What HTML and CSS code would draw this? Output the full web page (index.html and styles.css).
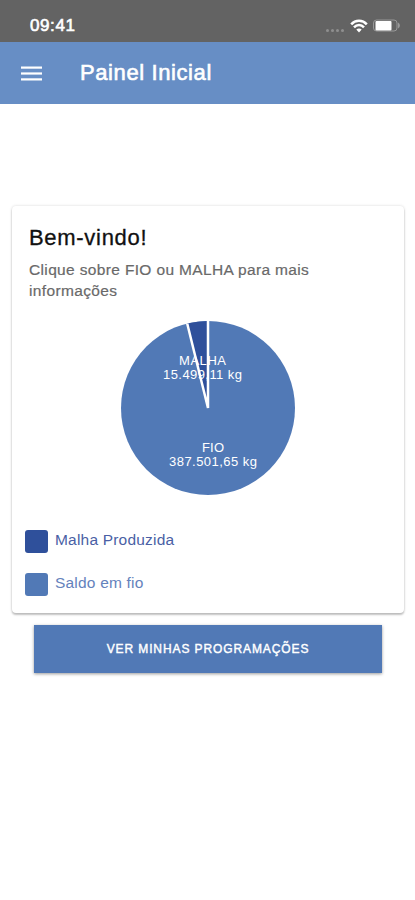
FILE: index.html
```html
<!DOCTYPE html>
<html lang="pt-BR">
  <head>
    <meta charset="UTF-8" />
    <meta name="viewport" content="width=device-width, initial-scale=1.0" />
    <title>Painel Inicial</title>
    <link rel="stylesheet" href="styles.css">
  </head>
  <body>
    <div class="status-bar">
      <span class="time">09:41</span>
      <div class="status-icons">
        <div class="signal"><i></i><i></i><i></i><i></i></div>
        <svg class="wifi" width="18" height="14" viewBox="0 0 18 14" fill="none" stroke="#fff" stroke-width="2.5">
          <path d="M1.2 5.3C5.4 0.7 12.6 0.7 16.8 5.3" />
          <path d="M4 8.3C6.8 5.3 11.2 5.3 14 8.3" />
          <path d="M9 13.4L6.3 10.5C7.8 9 10.2 9 11.7 10.5Z" fill="#fff" stroke="none" />
        </svg>
        <svg class="battery" width="28" height="14" viewBox="0 0 28 14">
          <rect x="0.5" y="1" width="23.500" height="11" rx="3" fill="none" stroke="#999" />
          <rect x="2.500" y="2" width="16" height="9.5" rx="1" fill="#fff" />
          <path d="M25 3.500C27.500 5 27.500 8 25 9.500Z" fill="#999" />
        </svg>
      </div>
    </div>

    <header class="toolbar">
      <svg class="menu" width="21" height="15" viewBox="0 0 21 15" fill="#fff">
        <rect y="0.5" width="21" height="2.2" />
        <rect y="6.4" width="21" height="2.2" />
        <rect y="12.3" width="21" height="2.2" />
      </svg>
      <h1>Painel Inicial</h1>
    </header>

    <main>
      <section class="card">
        <h2>Bem-vindo!</h2>
        <p class="subtitle">Clique sobre FIO ou MALHA para mais informações</p>

        <svg class="chart" width="180" height="180" viewBox="0 0 180 180">
          <circle cx="90" cy="90" r="87" fill="#5179b6" />
          <path d="M90 90L69.2 5.5A87 87 0 0 1 90 3Z" fill="#2f509b" />
          <path d="M69.2 5.5L90 90V2" fill="none" stroke="#fff" stroke-width="2.5" />
          <text x="84.5" y="46.5" textLength="47">MALHA</text>
          <text x="84.5" y="60.5" textLength="79">15.499,11 kg</text>
          <text x="95" y="134" textLength="22">FIO</text>
          <text x="95" y="147.5" textLength="88">387.501,65 kg</text>
        </svg>

        <ul class="legend">
          <li class="malha"><span class="box"></span><span class="label">Malha Produzida</span></li>
          <li class="fio"><span class="box"></span><span class="label">Saldo em fio</span></li>
        </ul>
      </section>

      <button class="button">VER MINHAS PROGRAMAÇÕES</button>
    </main>
  </body>
</html>
```

FILE: styles.css
```css
* {
  box-sizing: border-box;
}
body {
  margin: 0;
  min-height: 100vh;
  background-color: #fff;
  font-family: "Liberation Sans", Arial, sans-serif;
}
h1,
h2,
p,
ul {
  margin: 0;
  padding: 0;
}
.status-bar {
  display: flex;
  justify-content: space-between;
  height: 42px;
  padding: 16px 14px 0 30px;
  background-color: #636363;
  color: #fff;
}
.time {
  font-size: 17px;
  line-height: 19px;
  letter-spacing: 0.6px;
  -webkit-text-stroke: 0.6px #fff;
}
.status-icons {
  display: flex;
  align-items: flex-start;
  padding-top: 3px;
}
.signal {
  display: flex;
  gap: 2px;
  margin: 10px 6px 0 0;
}
.signal i {
  width: 3px;
  height: 3px;
  border-radius: 50%;
  background-color: #8f8f8f;
}
.battery {
  margin-left: 5px;
}
.toolbar {
  display: flex;
  align-items: center;
  height: 62px;
  padding-left: 21px;
  background-color: #678ec5;
  color: #fff;
}
h1 {
  margin-left: 38px;
  font-size: 22px;
  font-weight: 400;
  letter-spacing: 0.6px;
  -webkit-text-stroke: 0.6px #fff;
}
main {
  padding: 102px 11px 0 12px;
}
.card {
  display: flex;
  flex-direction: column;
  height: 407px;
  padding: 18px 13px 0;
  border-radius: 4px;
  background-color: #fff;
  box-shadow: 0 2px 2px rgba(0, 0, 0, 0.22), 0 0 3px rgba(0, 0, 0, 0.16);
}
h2 {
  margin-left: 4px;
  color: #111;
  font-size: 22px;
  font-weight: 400;
  line-height: 27px;
  letter-spacing: 0.7px;
  -webkit-text-stroke: 0.3px #111;
}
.subtitle {
  margin: 8px 60px 0 4px;
  color: #696969;
  font-size: 15.5px;
  line-height: 21px;
  letter-spacing: 0.35px;
  -webkit-text-stroke: 0.2px #696969;
}
.chart {
  margin: 17px 0 0 93px;
}
.chart text {
  fill: #fff;
  font-size: 13px;
  text-anchor: middle;
}
.legend {
  display: flex;
  flex-direction: column;
  gap: 20px;
  margin-top: 32px;
  list-style: none;
}
.legend li {
  display: flex;
  gap: 7px;
  height: 23px;
}
.box {
  width: 23px;
  height: 23px;
  border-radius: 3px;
}
.label {
  font-size: 15.5px;
  line-height: 20px;
  letter-spacing: 0.2px;
}
.malha {
  color: #4a5fa5;
}
.malha .box {
  background-color: #2f509b;
}
.fio {
  color: #6482bc;
}
.fio .box {
  background-color: #5179b6;
}
.button {
  display: block;
  width: 348px;
  height: 48px;
  margin: 12px 0 0 22px;
  padding: 0;
  border: none;
  background-color: #5179b6;
  box-shadow: 0 1px 3px rgba(0, 0, 0, 0.4);
  color: #fff;
  font-family: inherit;
  font-size: 12px;
  letter-spacing: 0.9px;
  -webkit-text-stroke: 0.4px #fff;
}
```
